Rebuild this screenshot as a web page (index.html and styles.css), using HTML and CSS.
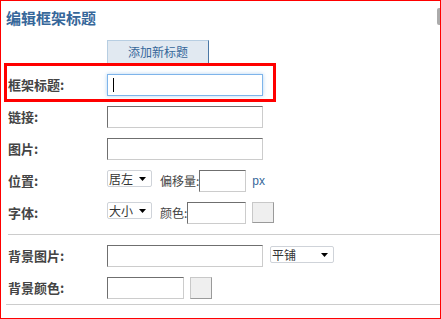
FILE: index.html
```html
<!DOCTYPE html>
<html lang="zh-CN">
<head>
  <meta charset="UTF-8" />
  <title>编辑框架标题</title>
  <link rel="stylesheet" href="styles.css">
</head>
<body>
  <div class="frame">
    <h2 class="title">编辑框架标题</h2>
    <div class="tabs"><span class="tab">添加新标题</span></div>

    <div class="form">
      <div class="row">
        <label class="label">框架标题:</label>
        <span class="focus-wrap"><input class="text focused" type="text"><i class="caret"></i></span>
      </div>
      <div class="row">
        <label class="label">链接:</label>
        <input class="text" type="text">
      </div>
      <div class="row">
        <label class="label">图片:</label>
        <input class="text" type="text">
      </div>
      <div class="row">
        <label class="label">位置:</label>
        <div class="select">居左</div>
        <span class="hint">偏移量:</span>
        <input class="text offset" type="text">
        <span class="unit">px</span>
      </div>
      <div class="row">
        <label class="label">字体:</label>
        <div class="select">大小</div>
        <span class="hint">颜色:</span>
        <input class="text color" type="text">
        <button class="swatch"></button>
      </div>

      <hr class="sep">

      <div class="row">
        <label class="label">背景图片:</label>
        <input class="text" type="text">
        <div class="select wide">平铺</div>
      </div>
      <div class="row">
        <label class="label">背景颜色:</label>
        <input class="text bg-color" type="text">
        <button class="swatch tall"></button>
      </div>

      <hr class="sep last">
    </div>

    <!-- annotation box over the first row -->
    <div class="highlight"></div>
    <div class="scroll-thumb"></div>
  </div>
</body>
</html>
```

FILE: styles.css
```css
* {
  box-sizing: border-box;
}

body {
  margin: 0;
  font-family: "Noto Sans CJK SC", "Liberation Sans", sans-serif;
  background-color: white;
}

.frame {
  position: relative;
  width: 441px;
  height: 319px;
  border: 1px solid #ff0000;
  overflow: hidden;
}

.title {
  margin: 0;
  height: 39px;
  padding: 8px 0 0 5px;
  font-size: 15px;
  line-height: 18px;
  font-weight: bold;
  color: #36679a;
}

.tabs {
  height: 23px;
  padding-left: 106px;
}

.tab {
  display: block;
  width: 102px;
  height: 23px;
  background-color: #e1e9f1;
  border: 1px solid #b7cee2;
  border-right-color: #4a78a6;
  border-bottom: none;
  font-size: 12px;
  line-height: 22px;
  text-align: center;
  color: #36679a;
}

.form {
  margin-top: 6px;
}

.row {
  display: flex;
  align-items: flex-start;
  height: 32px;
  padding: 5px 0 0 7px;
  font-size: 12px;
  color: #333;
}

.label {
  width: 99px;
  flex-shrink: 0;
  font-size: 13px;
  font-weight: bold;
  line-height: 22px;
  color: #444;
}

.text {
  width: 156px;
  height: 22px;
  margin: 0;
  padding: 0 4px;
  border: 1px solid #cccccc;
  border-top-color: #6f6f6f;
  border-left-color: #6f6f6f;
  background-color: white;
  font-size: 12px;
  outline: none;
}

.text.focused {
  border-color: #7eb4ea;
  box-shadow: 0 0 4px rgba(126, 180, 234, 0.6);
}

.focus-wrap {
  position: relative;
  display: block;
}

.caret {
  position: absolute;
  left: 6px;
  top: 4px;
  width: 1px;
  height: 14px;
  background-color: #000;
}

.text.offset {
  width: 47px;
}

.text.color {
  width: 59px;
}

.text.bg-color {
  width: 77px;
}

.select {
  position: relative;
  width: 45px;
  height: 17px;
  padding-left: 1px;
  border: 1px solid #cfd3d9;
  border-radius: 2px;
  font-size: 12px;
  line-height: 15px;
  color: #333;
  background-color: white;
}

.select::after {
  content: "";
  position: absolute;
  right: 5px;
  top: 6px;
  width: 7px;
  height: 4px;
  background-color: #000;
  clip-path: polygon(0 0, 100% 0, 50% 100%);
}

.select.wide {
  width: 64px;
  margin-left: 7px;
  margin-top: 1px;
}

.hint {
  margin-left: 8px;
  line-height: 22px;
  color: #444;
}

.unit {
  margin-left: 6px;
  line-height: 22px;
  font-family: "Liberation Sans", sans-serif;
  color: #36679a;
}

.swatch {
  width: 22px;
  height: 21px;
  margin: 0 0 0 6px;
  padding: 0;
  background-color: #efefef;
  border: 1px solid #c8c8c8;
  border-right-color: #9a9a9a;
  border-bottom-color: #9a9a9a;
}

.swatch.tall {
  height: 22px;
}

.sep {
  height: 0;
  margin: 5px 0 5px 7px;
  border: none;
  border-top: 1px solid #cccccc;
}

.sep.last {
  margin: 0 0 0 5px;
}

.highlight {
  position: absolute;
  left: 3px;
  top: 62px;
  width: 272px;
  height: 39px;
  border: 3px solid #ff0000;
}

.scroll-thumb {
  position: absolute;
  right: 0;
  top: 7px;
  width: 3px;
  height: 17px;
  border-radius: 2px 0 0 2px;
  background-color: #ababab;
}
```
